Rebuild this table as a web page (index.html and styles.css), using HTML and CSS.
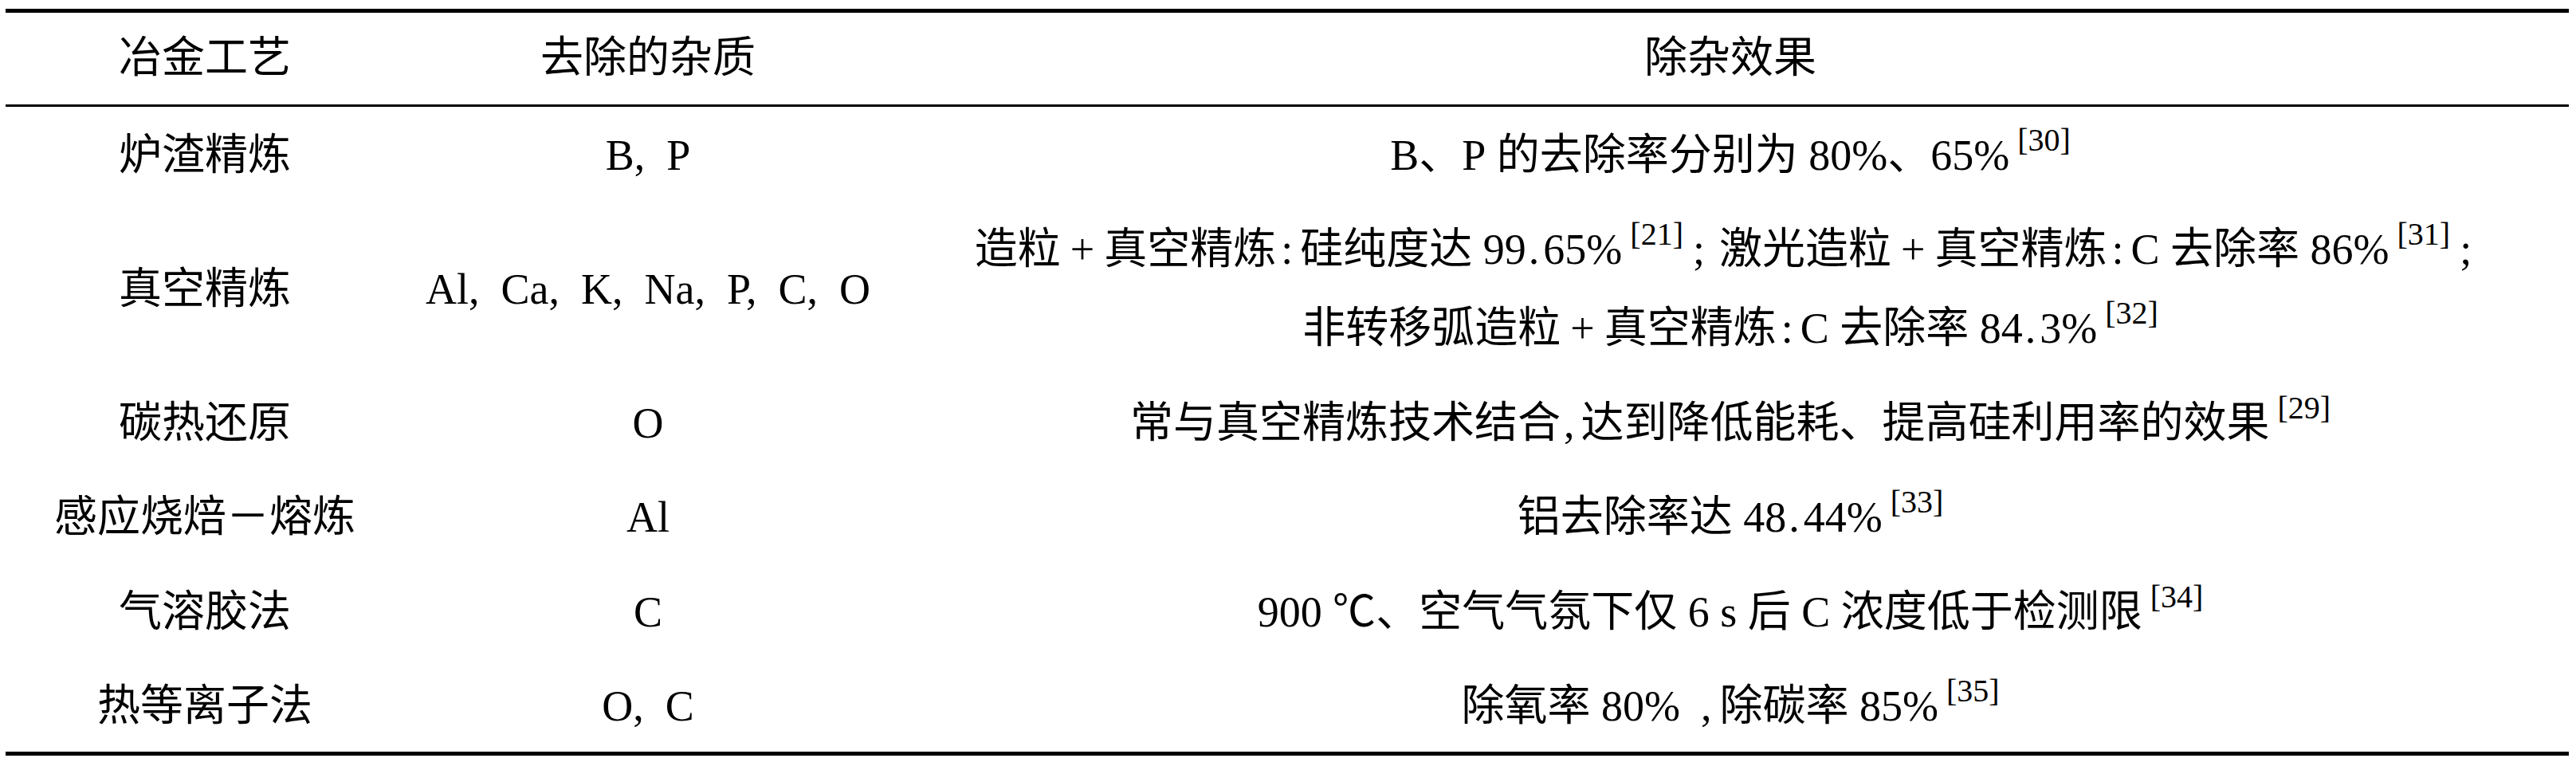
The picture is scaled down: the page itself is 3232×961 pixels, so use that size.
FILE: index.html
```html
<!DOCTYPE html>
<html lang="zh-CN">
<head>
<meta charset="utf-8">
<title>冶金工艺除杂效果</title>
<link rel="stylesheet" href="styles.css">
</head>
<body>
<table class="tbl">
  <colgroup>
    <col class="c1">
    <col class="c2">
    <col class="c3">
  </colgroup>
  <thead>
    <tr><th>冶金工艺</th><th>去除的杂质</th><th>除杂效果</th></tr>
  </thead>
  <tbody>
    <tr>
      <td>炉渣精炼</td>
      <td><span class="en">B,&ensp;P</span></td>
      <td><span class="en">B</span>、<span class="en">P</span> 的去除率分别为 <span class="en">80%</span>、<span class="en">65%</span><sup class="ref">[30]</sup></td>
    </tr>
    <tr>
      <td>真空精炼</td>
      <td><span class="en">Al,&ensp;Ca,&ensp;K,&ensp;Na,&ensp;P,&ensp;C,&ensp;O</span></td>
      <td>造粒<span class="op">+</span>真空精炼<span class="colon">:</span>硅纯度达 <span class="en">99<span class="pt">.</span>65%</span><sup class="ref">[21]</sup><span class="semi">;</span>激光造粒<span class="op">+</span>真空精炼<span class="colon">:</span><span class="en">C</span> 去除率 <span class="en">86%</span><sup class="ref">[31]</sup><span class="semi">;</span><br>非转移弧造粒<span class="op">+</span>真空精炼<span class="colon">:</span><span class="en">C</span> 去除率 <span class="en">84<span class="pt">.</span>3%</span><sup class="ref">[32]</sup></td>
    </tr>
    <tr>
      <td>碳热还原</td>
      <td><span class="en">O</span></td>
      <td>常与真空精炼技术结合<span class="comma">,</span>达到降低能耗、提高硅利用率的效果<sup class="ref">[29]</sup></td>
    </tr>
    <tr>
      <td>感应烧焙－熔炼</td>
      <td><span class="en">Al</span></td>
      <td>铝去除率达 <span class="en">48<span class="pt">.</span>44%</span><sup class="ref">[33]</sup></td>
    </tr>
    <tr>
      <td>气溶胶法</td>
      <td><span class="en">C</span></td>
      <td><span class="en">900 ℃</span>、空气气氛下仅 <span class="en">6 s</span> 后 <span class="en">C</span> 浓度低于检测限<sup class="ref">[34]</sup></td>
    </tr>
    <tr>
      <td>热等离子法</td>
      <td><span class="en">O,&ensp;C</span></td>
      <td>除氧率 <span class="en">80%</span><span class="comma comma-wide">,</span>除碳率 <span class="en">85%</span><sup class="ref">[35]</sup></td>
    </tr>
  </tbody>
</table>
</body>
</html>
```

FILE: styles.css
```css
html, body {
  margin: 0;
  background: #fff;
}

body {
  padding: 11px 9px 0 7px;
  font-family: "Liberation Serif", "Noto Sans CJK SC", serif;
  font-size: 54px;
  color: #000;
}

.tbl {
  width: 100%;
  table-layout: fixed;
  border-collapse: separate;
  border-spacing: 0;
  border-top: 5px solid #000;
  border-bottom: 5px solid #000;
}

.c1 { width: 500px; }
.c2 { width: 612px; }

.tbl th {
  font-weight: normal;
  padding: 0;
  line-height: 115px;
  border-bottom: 3px solid #000;
  text-align: center;
  white-space: nowrap;
}

.tbl td {
  padding: 12px 0 7.4px;
  line-height: 99px;
  text-align: center;
  white-space: nowrap;
  vertical-align: middle;
}

.en {
  font-family: "Liberation Serif", serif;
}

.pt {
  margin: 0 5px 0 3px;
}

.op {
  font-family: "Liberation Serif", serif;
  margin: 0 12px;
}

.colon {
  font-family: "Liberation Serif", serif;
  margin: 0 9px 0 6px;
}

.semi {
  font-family: "Liberation Serif", serif;
  margin: 0 18px 0 12px;
}

.comma {
  font-family: "Liberation Serif", serif;
  margin: 0 8px 0 4px;
}

.comma-wide {
  margin: 0 10px 0 26px;
}

.ref {
  font-family: "Liberation Serif", serif;
  font-size: 40px;
  line-height: 0;
  vertical-align: 24px;
  margin-left: 10px;
}
```
